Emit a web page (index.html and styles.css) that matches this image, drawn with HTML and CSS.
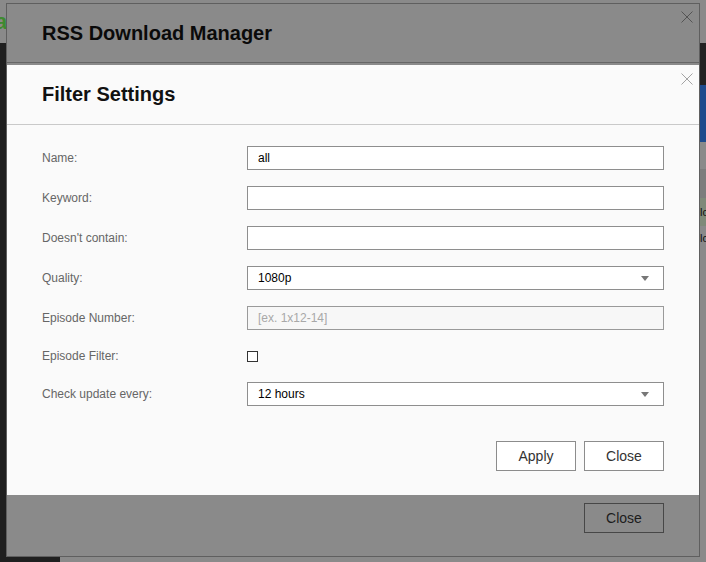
FILE: index.html
```html
<!DOCTYPE html>
<html lang="en">
<head>
<meta charset="utf-8">
<title>RSS Download Manager - Filter Settings</title>
<link rel="stylesheet" href="styles.css">
</head>
<body>
  <div class="page">
    <div class="logo"><span>a</span></div>
    <div class="sidebar"></div>
    <div class="strip strip-dark"></div>
    <div class="strip strip-blue"></div>
    <div class="strip strip-grey"></div>
    <div class="strip strip-mid"></div>
    <div class="strip strip-green">lo</div>
    <div class="strip strip-text">lo</div>
  </div>

  <div class="dialog outer">
    <div class="dlg-head">
      <h1 class="dlg-title">RSS Download Manager</h1>
    </div>
    <svg class="dlg-x outer-x" width="12" height="12" viewBox="0 0 12 12"><path d="M0.5 0.5L11.5 11.5M11.5 0.5L0.5 11.5"/></svg>
    <div class="dlg-foot outer-foot">
      <button class="btn btn-dim">Close</button>
    </div>
  </div>

  <div class="dialog inner">
    <div class="dlg-head inner-head">
      <h2 class="dlg-title">Filter Settings</h2>
    </div>
    <svg class="dlg-x inner-x" width="12" height="12" viewBox="0 0 12 12"><path d="M0.5 0.5L11.5 11.5M11.5 0.5L0.5 11.5"/></svg>
    <div class="form">
      <label class="lbl">Name:</label>
      <input class="field" type="text" value="all">

      <label class="lbl">Keyword:</label>
      <input class="field" type="text" value="">

      <label class="lbl">Doesn't contain:</label>
      <input class="field" type="text" value="">

      <label class="lbl">Quality:</label>
      <div class="field select"><span>1080p</span><svg class="caret" width="8" height="5" viewBox="0 0 8 5"><polygon points="0,0 8,0 4,5"/></svg></div>

      <label class="lbl">Episode Number:</label>
      <input class="field field-off" type="text" placeholder="[ex. 1x12-14]" disabled>

      <label class="lbl">Episode Filter:</label>
      <div class="check-cell"><input class="cb" type="checkbox"></div>

      <label class="lbl">Check update every:</label>
      <div class="field select"><span>12 hours</span><svg class="caret" width="8" height="5" viewBox="0 0 8 5"><polygon points="0,0 8,0 4,5"/></svg></div>
    </div>
    <div class="dlg-foot inner-foot">
      <button class="btn">Apply</button>
      <button class="btn">Close</button>
    </div>
  </div>
</body>
</html>
```

FILE: styles.css
```css
* { box-sizing: border-box; }
html, body { margin: 0; padding: 0; }
body {
  width: 706px;
  height: 562px;
  overflow: hidden;
  position: relative;
  background: #8a8a8a;
  font-family: "Liberation Sans", Arial, sans-serif;
}

/* background page (dimmed) */
.page {
  display: grid;
  grid-template-columns: 60px 1fr 6px;
  grid-template-rows: 43px 42px 57px 27px 29px 28px 1fr;
  height: 562px;
}
.logo {
  grid-column: 1;
  grid-row: 1;
  overflow: hidden;
  font-size: 22px;
  font-weight: bold;
  line-height: 43px;
  color: #3f8a30;
  white-space: nowrap;
}
.logo span { display: inline-block; margin-left: -5px; }
.sidebar { grid-column: 1; grid-row: 2 / -1; background: #1f1f1f; }
.strip { grid-column: 3; overflow: hidden; white-space: nowrap; }
.strip-dark { grid-row: 2; background: #222222; }
.strip-blue { grid-row: 3; background: #1e4b8d; }
.strip-grey { grid-row: 4; background: #8a8a8a; }
.strip-mid { grid-row: 5; background: #7d7d7d; }
.strip-green { grid-row: 6; background: #7f8a79; font-size: 11px; line-height: 28px; color: #111; }
.strip-text { grid-row: 7; font-size: 11px; line-height: 20px; padding-top: 2px; color: #111; }

/* dialogs */
.dialog {
  position: absolute;
  display: flex;
  flex-direction: column;
}
.dlg-head {
  height: 59px;
  padding: 18px 35px 0;
}
.dlg-title {
  margin: 0;
  font-size: 20px;
  line-height: 23px;
  font-weight: bold;
  color: #111;
}
.dlg-x {
  position: absolute;
  right: 6px;
  fill: none;
  stroke-width: 1;
}
.dlg-foot {
  display: flex;
  justify-content: flex-end;
  gap: 8px;
  padding: 0 35px;
}

.outer {
  left: 6px;
  top: 3px;
  width: 694px;
  height: 554px;
  background: #8a8a8a;
  border: 1px solid #5f5f5f;
}
.outer .dlg-head { border-bottom: 1px solid #666666; }
.outer .dlg-title { color: #0a0a0a; }
.outer-x { top: 7px; stroke: #545454; }
.outer-foot { margin-top: auto; padding-bottom: 23px; }

.inner {
  left: 7px;
  top: 65px;
  width: 692px;
  height: 430px;
  background: #fafafa;
}
.inner-head { height: 60px; border-bottom: 1px solid #c9c9c9; }
.inner-x { top: 8px; stroke: #a3a3a3; }
.inner-foot { margin-top: 35px; }

/* form */
.form {
  display: grid;
  grid-template-columns: 205px 417px;
  row-gap: 16px;
  align-items: center;
  padding: 21px 35px 0;
}
.lbl {
  font-size: 12px;
  line-height: 14px;
  color: #666666;
}
.field {
  display: flex;
  align-items: center;
  width: 417px;
  height: 24px;
  margin: 0;
  padding: 0 14px 0 10px;
  border: 1px solid #8e8e8e;
  border-radius: 0;
  background: #ffffff;
  font-family: inherit;
  font-size: 12px;
  color: #000;
  outline: none;
}
.field-off { background: #f7f7f7; border-color: #9a9a9a; }
.field-off::placeholder { color: #a8a8a8; opacity: 1; }
.select { justify-content: space-between; }
.caret { fill: #777777; margin-top: 1px; }
.check-cell { height: 20px; display: flex; align-items: center; }
.cb {
  appearance: none;
  -webkit-appearance: none;
  width: 11px;
  height: 11px;
  margin: 0;
  border: 1px solid #333333;
  background: #ffffff;
  border-radius: 0;
}

/* buttons */
.btn {
  width: 80px;
  height: 30px;
  padding: 0;
  border: 1px solid #8c8c8c;
  border-radius: 0;
  background: #ffffff;
  color: #333333;
  font-family: inherit;
  font-size: 14px;
}
.btn-dim {
  background: transparent;
  border-color: #474747;
  color: #1c1c1c;
}
```
